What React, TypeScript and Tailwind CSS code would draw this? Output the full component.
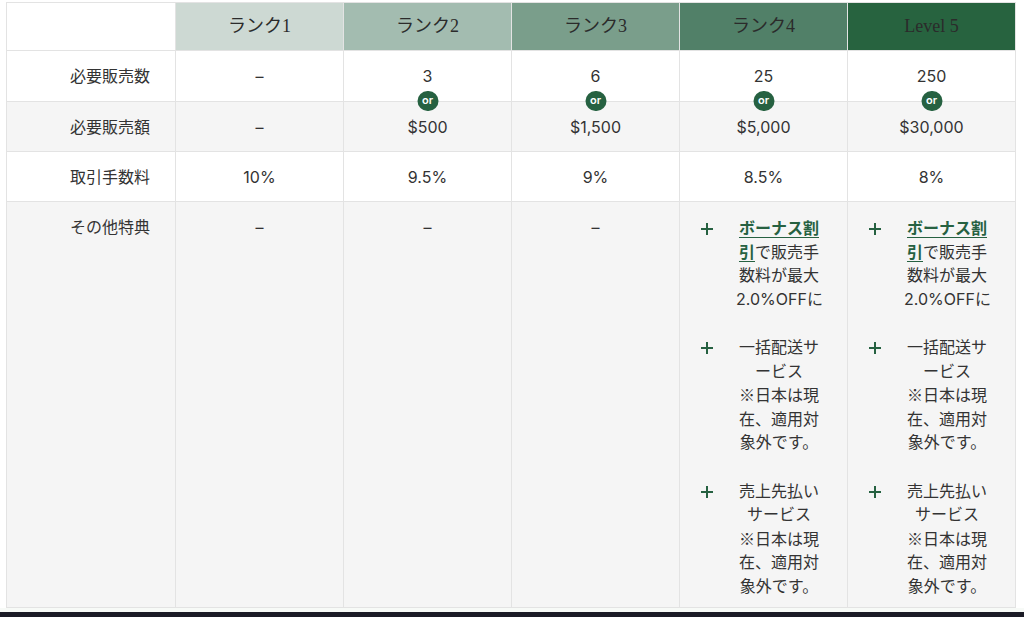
import React from "react";

const ranks = [
  { name: "ランク1", bg: "bg-[#cdd9d3]" },
  { name: "ランク2", bg: "bg-[#a3bcb0]" },
  { name: "ランク3", bg: "bg-[#7a9e8b]" },
  { name: "ランク4", bg: "bg-[#518068]" },
  { name: "Level 5", bg: "bg-[#27633f]" },
];

const salesCount = ["–", "3", "6", "25", "250"];
const salesAmount = ["–", "$500", "$1,500", "$5,000", "$30,000"];
const fees = ["10%", "9.5%", "9%", "8.5%", "8%"];

const cjk = { fontFamily: '"Noto Sans CJK JP", sans-serif' };

const Plus = () => (
  <svg width="14" height="14" viewBox="0 0 14 14" className="mt-[5px]">
    <path d="M7 1v12M1 7h12" stroke="#266141" strokeWidth="2" />
  </svg>
);

const PerkItem = ({ lines }: { lines: React.ReactNode[] }) => (
  <div className="flex mb-[25px] last:mb-0">
    <div className="w-[56px] pl-[20px] shrink-0">
      <Plus />
    </div>
    <div className="w-[86px] text-center whitespace-nowrap">
      {lines.map((l, i) => (
        <div key={i}>{l}</div>
      ))}
    </div>
  </div>
);

const link = "font-bold text-[#266141] underline underline-offset-[3px]";

const notice = [
  <span key="n" style={cjk}>※日本は現</span>,
  "在、適用対",
  "象外です。",
];

const Perks = () => (
  <div className="text-left">
    <PerkItem
      lines={[
        <a key="a" className={link}>ボーナス割</a>,
        <>
          <a className={link}>引</a>で販売手
        </>,
        "数料が最大",
        "2.0%OFFに",
      ]}
    />
    <PerkItem lines={["一括配送サ", "ービス", ...notice]} />
    <PerkItem lines={["売上先払い", "サービス", ...notice]} />
  </div>
);

const cell = "border border-[#e3e3e3] text-center align-middle";
const label = "border border-[#e3e3e3] text-right pr-[25px] align-middle";

export default function App() {
  return (
    <div
      className="h-[617px] flex flex-col bg-white text-[#333] text-[16px]"
      style={{ fontFamily: '"Inter", "Noto Sans CJK JP", sans-serif' }}
    >
      <div className="pt-[2px] pl-[6px]">
        <table className="table-fixed border-collapse w-[1009px]">
          <colgroup>
            <col className="w-[169px]" />
            {ranks.map((r) => (
              <col key={r.name} className="w-[168px]" />
            ))}
          </colgroup>
          <thead>
            <tr className="h-[48px]">
              <th className="border border-[#e3e3e3] bg-white" />
              {ranks.map((r) => (
                <th
                  key={r.name}
                  className={`${r.bg} border border-[#e3e3e3] font-normal text-[18px] text-[#2b2b2b]`}
                  style={{ fontFamily: '"Liberation Serif", "Noto Sans CJK JP", serif' }}
                >
                  {r.name}
                </th>
              ))}
            </tr>
          </thead>
          <tbody>
            <tr className="h-[51px] bg-white">
              <td className={label}>必要販売数</td>
              {salesCount.map((v, i) => (
                <td key={i} className={`${cell} relative`}>
                  {v}
                  {i > 0 && (
                    <span className="absolute left-1/2 -translate-x-1/2 bottom-[-10px] z-10 w-[21px] h-[20px] rounded-full bg-[#266141] text-white text-[11px] font-semibold leading-[19px]">
                      or
                    </span>
                  )}
                </td>
              ))}
            </tr>
            <tr className="h-[50px] bg-[#f5f5f5]">
              <td className={label}>必要販売額</td>
              {salesAmount.map((v, i) => (
                <td key={i} className={cell}>
                  {v}
                </td>
              ))}
            </tr>
            <tr className="h-[50px] bg-white">
              <td className={label}>取引手数料</td>
              {fees.map((v, i) => (
                <td key={i} className={cell}>
                  {v}
                </td>
              ))}
            </tr>
            <tr className="bg-[#f5f5f5] leading-[23.5px]">
              <td className={`${label} align-top pt-[14px]`}>その他特典</td>
              {[0, 1, 2].map((i) => (
                <td key={i} className={`${cell} align-top pt-[14px]`}>
                  –
                </td>
              ))}
              {[3, 4].map((i) => (
                <td key={i} className="border border-[#e3e3e3] align-top pt-[15px] pb-[9px]">
                  <Perks />
                </td>
              ))}
            </tr>
          </tbody>
        </table>
      </div>
      <div className="flex-1 bg-[#f7faf7]" />
      <div className="h-[5px] bg-[#1b1b26]" />
    </div>
  );
}
